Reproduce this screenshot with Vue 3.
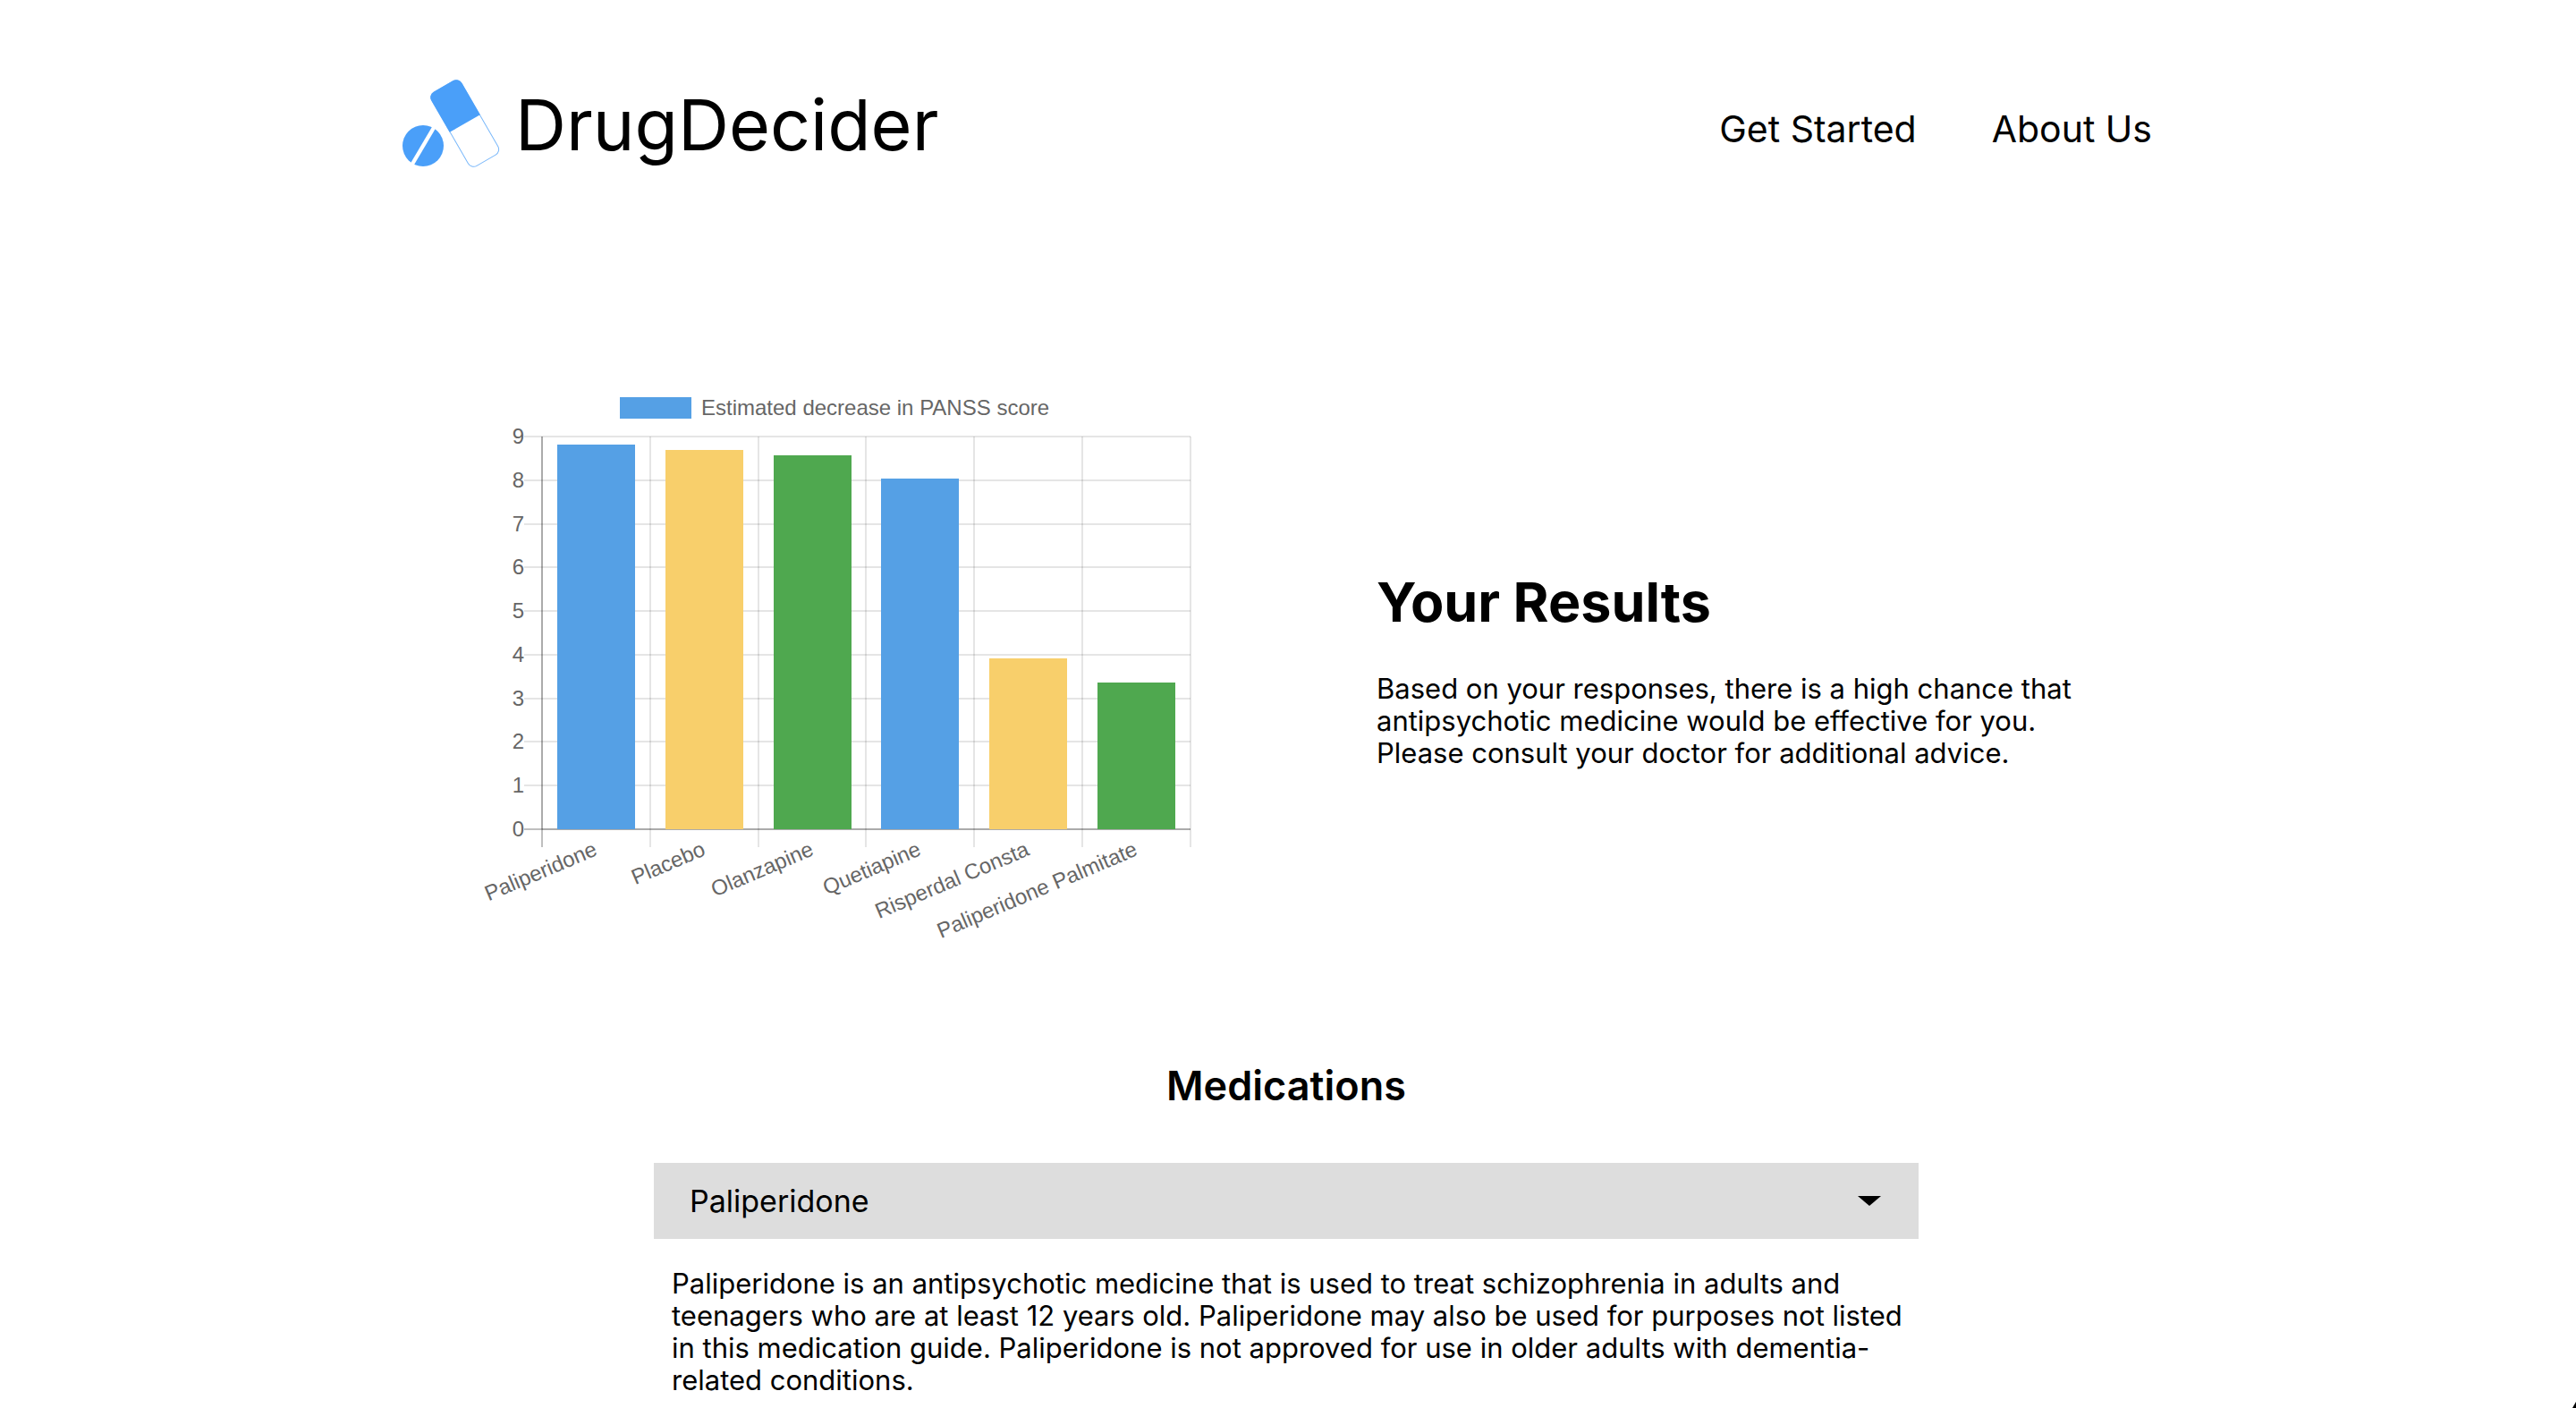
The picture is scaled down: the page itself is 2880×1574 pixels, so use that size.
<script setup>
import { ref } from 'vue'

const open = ref(true)

const blue = '#55a0e5'
const yellow = '#f8cf6b'
const green = '#4fa84f'

const bars = [
  { label: 'Paliperidone', top: 61, color: blue },
  { label: 'Placebo', top: 67, color: yellow },
  { label: 'Olanzapine', top: 73, color: green },
  { label: 'Quetiapine', top: 99, color: blue },
  { label: 'Risperdal Consta', top: 300, color: yellow },
  { label: 'Paliperidone Palmitate', top: 327, color: green },
]
const baseY = 491
const rows = [9, 8, 7, 6, 5, 4, 3, 2, 1].map((value) => ({
  value,
  y: Math.round(baseY - (value * 439) / 9),
}))
const columnX = (i) => Math.round(76 + i * 120.8)
</script>

<template>
  <div class="page">
    <header class="header">
      <a class="brand" href="#">
        <svg class="logo" viewBox="0 0 112 100" width="112" height="100" aria-hidden="true">
          <circle cx="23" cy="75" r="23" fill="#4a9ff9" />
          <path d="M36 53 L10 97" stroke="#fff" stroke-width="4.4" />
          <g transform="translate(69.75 50) rotate(-30)">
            <rect x="-19.2" y="-47.6" width="38.4" height="95.2" rx="7" fill="#fff" stroke="#7ab8fa" stroke-width="1" />
            <path d="M-19.7 0 V-41 a7 7 0 0 1 7 -7 H12.7 a7 7 0 0 1 7 7 V0 Z" fill="#4a9ff9" />
          </g>
        </svg>
        <span class="brand-name">DrugDecider</span>
      </a>
      <nav class="nav">
        <a href="#">Get Started</a>
        <a href="#">About Us</a>
      </nav>
    </header>

    <main>
      <section class="results">
        <svg class="chart" viewBox="0 0 810 624" role="img" aria-label="Estimated decrease in PANSS score">
          <rect x="163" y="8" width="80" height="24" :fill="blue" />
          <text x="254" y="28">Estimated decrease in PANSS score</text>

          <g stroke="#000" stroke-opacity="0.1" stroke-width="2">
            <line v-for="row in rows" :key="row.value" x1="56" x2="801" :y1="row.y" :y2="row.y" />
            <line v-for="i in 6" :key="i" :x1="columnX(i)" :x2="columnX(i)" y1="52" y2="511" />
          </g>
          <g stroke="#000" stroke-width="2">
            <line x1="76" x2="76" y1="52" y2="511" stroke-opacity="0.25" />
            <line x1="76" x2="76" y1="52" y2="491" stroke-opacity="0.1" />
            <line x1="56" x2="801" y1="491" y2="491" stroke-opacity="0.25" />
            <line x1="76" x2="801" y1="491" y2="491" stroke-opacity="0.1" />
          </g>

          <g v-for="(bar, i) in bars" :key="bar.label">
            <rect :x="columnX(i) + 17" :y="bar.top" width="87" :height="baseY - bar.top" :fill="bar.color" />
            <text
              text-anchor="end"
              dy="8"
              :transform="`translate(${columnX(i) + 60} 512) rotate(-23)`"
            >{{ bar.label }}</text>
          </g>

          <g text-anchor="end">
            <text v-for="row in rows" :key="row.value" x="56" :y="row.y + 8">{{ row.value }}</text>
            <text x="56" :y="baseY + 8">0</text>
          </g>
        </svg>

        <div class="summary">
          <h1>Your Results</h1>
          <p>
            Based on your responses, there is a high chance that antipsychotic medicine would be
            effective for you. Please consult your doctor for additional advice.
          </p>
        </div>
      </section>

      <section class="medications">
        <h2>Medications</h2>
        <button class="toggle" type="button" :aria-expanded="open" aria-controls="paliperidone" @click="open = !open">
          <span>Paliperidone</span>
          <svg viewBox="0 0 26 11" width="26" height="11" aria-hidden="true">
            <path d="M0 0 H26 L13 11 Z" />
          </svg>
        </button>
        <p v-show="open" id="paliperidone" class="details">
          Paliperidone is an antipsychotic medicine that is used to treat schizophrenia in adults and
          teenagers who are at least 12 years old. Paliperidone may also be used for purposes not
          listed in this medication guide. Paliperidone is not approved for use in older adults with
          dementia-related conditions.
        </p>
      </section>
    </main>
    <span class="window-corner"></span>
  </div>
</template>

<style>
body {
  margin: 0;
  background: #fff;
}
</style>

<style scoped>
.page {
  color: #000;
  font-family: Inter, "Liberation Sans", sans-serif;
  font-size: 31px;
  line-height: 36px;
}

.header {
  display: flex;
  align-items: center;
  justify-content: space-between;
  padding: 86px 474px 0 450px;
}

.brand {
  display: flex;
  align-items: center;
  gap: 14px;
}

.brand-name {
  padding-top: 2px;
  font-size: 79px;
  line-height: 102px;
}

a {
  color: inherit;
  text-decoration: none;
}

.logo {
  flex: none;
}

.nav {
  display: flex;
  gap: 84px;
  padding-top: 12px;
  font-size: 41px;
  line-height: 52px;
}

.results {
  display: flex;
  align-items: center;
  gap: 199px;
  padding: 246px 540px 0 530px;
}

.chart {
  width: 810px;
  flex: none;
  overflow: visible;
}

.chart text {
  fill: #666;
  font-family: "Liberation Sans", sans-serif;
  font-size: 24px;
}

.summary {
  max-width: 800px;
}

h1 {
  margin: 0 0 42px;
  font-size: 61px;
  line-height: 74px;
}

p {
  margin: 0;
}

.medications {
  display: flex;
  flex-direction: column;
  padding: 124px 735px 0 731px;
}

h2 {
  margin: 0 0 56px;
  text-align: center;
  font-size: 45px;
  font-weight: 600;
  line-height: 60px;
}

.toggle {
  display: flex;
  align-items: center;
  justify-content: space-between;
  height: 85px;
  padding: 0 42px 0 40px;
  border: 0;
  background: #ddd;
  color: #000;
  font: inherit;
  font-size: 34px;
}

.details {
  padding: 32px 10px 0 20px;
}

.window-corner {
  position: fixed;
  right: 0;
  bottom: 0;
  width: 4px;
  height: 7px;
  background: #000;
  clip-path: polygon(100% 0, 100% 100%, 0 100%);
}
</style>
